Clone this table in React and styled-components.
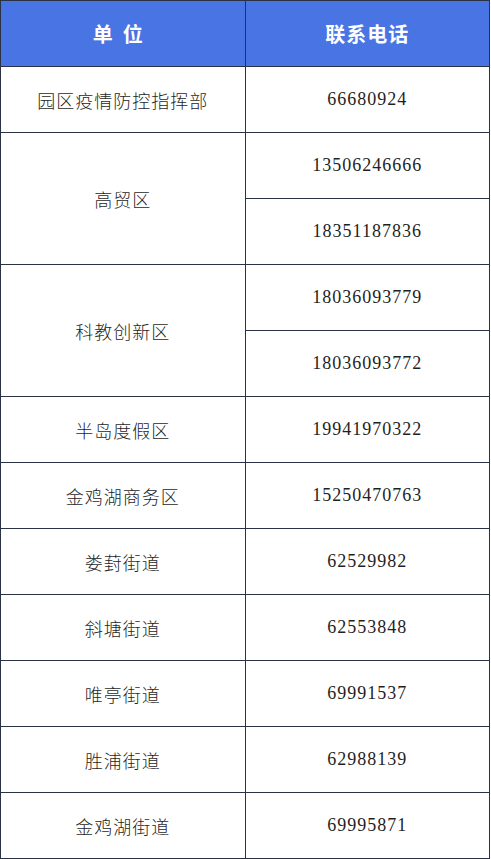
import styled, { createGlobalStyle } from "styled-components";

const Global = createGlobalStyle`
  html, body {
    margin: 0;
    padding: 0;
    background: #ffffff;
  }
`;

const Table = styled.table`
  width: 490px;
  border-collapse: collapse;
  table-layout: fixed;
  font-family: "Liberation Serif", "Noto Sans CJK SC", serif;
  color: #222;
`;

const HeadCell = styled.th`
  height: 65px;
  padding: 0;
  background: #4874e4;
  color: #ffffff;
  font-family: "Noto Sans CJK SC", sans-serif;
  font-size: 20px;
  font-weight: 700;
  letter-spacing: ${(p) => p.$spread || "1px"};
  border: 1px solid #2a3346;
  text-align: center;
`;

const Cell = styled.td`
  height: 65px;
  padding: 0;
  border: 1px solid #2a3346;
  text-align: center;
  vertical-align: middle;
  font-size: ${(p) => (p.$num ? "18px" : "18px")};
  font-family: ${(p) =>
    p.$num
      ? `"Liberation Serif", serif`
      : `"Noto Sans CJK SC", sans-serif`};
  font-weight: ${(p) => (p.$num ? 400 : 300)};
  letter-spacing: 1px;
  color: #1f1f1f;
`;

const rows = [
  { name: "园区疫情防控指挥部", phones: ["66680924"] },
  { name: "高贸区", phones: ["13506246666", "18351187836"] },
  { name: "科教创新区", phones: ["18036093779", "18036093772"] },
  { name: "半岛度假区", phones: ["19941970322"] },
  { name: "金鸡湖商务区", phones: ["15250470763"] },
  { name: "娄葑街道", phones: ["62529982"] },
  { name: "斜塘街道", phones: ["62553848"] },
  { name: "唯亭街道", phones: ["69991537"] },
  { name: "胜浦街道", phones: ["62988139"] },
  { name: "金鸡湖街道", phones: ["69995871"] },
];

export default function App() {
  return (
    <>
      <Global />
      <Table>
        <thead>
          <tr>
            <HeadCell $spread="10px">单位</HeadCell>
            <HeadCell>联系电话</HeadCell>
          </tr>
        </thead>
        <tbody>
          {rows.map((r) =>
            r.phones.map((p, i) => (
              <tr key={r.name + p}>
                {i === 0 && <Cell rowSpan={r.phones.length}>{r.name}</Cell>}
                <Cell $num>{p}</Cell>
              </tr>
            ))
          )}
        </tbody>
      </Table>
    </>
  );
}
